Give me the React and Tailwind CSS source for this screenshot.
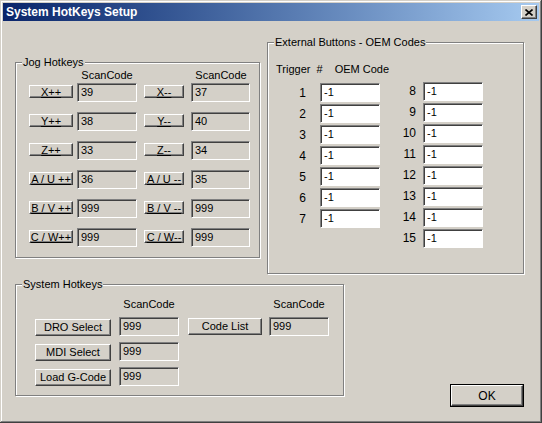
const FONT = { fontFamily: '"Liberation Sans", Arial, sans-serif' };

const raised =
  "border border-t-white border-l-white border-b-[#404040] border-r-[#404040] shadow-[inset_-1px_-1px_0_#808080] bg-[#d4d0c8]";

const Field = ({ value, white, w = "w-[60px]" }) => (
  <div
    className={`${w} h-[19px] shrink-0 border border-t-[#808080] border-l-[#808080] border-b-white border-r-white shadow-[inset_1px_1px_0_#404040] pl-[3px] text-[11px] leading-[17px] text-black ${
      white ? "bg-white" : "bg-[#d4d0c8]"
    }`}
  >
    {value}
  </div>
);

const JogButton = ({ label, w }) => (
  <div
    className={`${w} h-[13px] mt-[2px] shrink-0 flex justify-center ${raised} text-[11px] leading-[12px] text-black`}
  >
    <span className="underline underline-offset-[1px] whitespace-pre">{label}</span>
  </div>
);

const SysButton = ({ label, w = "w-[76px]" }) => (
  <div
    className={`${w} h-[17px] mt-[2px] shrink-0 flex items-center justify-center ${raised} text-[11px] leading-[15px] text-black`}
  >
    {label}
  </div>
);

const Group = ({ title, className, children }) => (
  <div
    className={`relative shrink-0 border border-[#808080] shadow-[inset_1px_1px_0_#fff,1px_1px_0_#fff] ${className}`}
  >
    <div className="absolute -top-[8px] left-[6px] bg-[#d4d0c8] px-[1px] text-[11px] leading-[14px] text-black">
      {title}
    </div>
    {children}
  </div>
);

const jogRows = [
  ["X++", "39", "X--", "37"],
  ["Y++", "38", "Y--", "40"],
  ["Z++", "33", "Z--", "34"],
  ["A / U ++", "36", "A / U --", "35"],
  ["B / V ++", "999", "B / V --", "999"],
  ["C / W++", "999", "C / W--", "999"],
];

export default function App() {
  return (
    <div
      style={FONT}
      className="w-[542px] h-[423px] bg-[#d4d0c8] p-[3px] flex flex-col shadow-[inset_-1px_-1px_0_#404040,inset_1px_1px_0_#d4d0c8,inset_-2px_-2px_0_#808080,inset_2px_2px_0_#fff]"
    >
      {/* title bar */}
      <div className="h-[18px] flex items-center justify-between bg-linear-to-r from-[#0a246a] to-[#a6caf0]">
        <span className="pl-[3px] text-[12px] font-bold text-white leading-[16px]">
          System HotKeys Setup
        </span>
        <div className={`w-[16px] h-[14px] mr-[2px] flex items-center justify-center ${raised}`}>
          <svg width="8" height="7" viewBox="0 0 8 7">
            <path d="M0.5 0.5 L7.5 6.5 M7.5 0.5 L0.5 6.5" stroke="#000" strokeWidth="1.6" />
          </svg>
        </div>
      </div>

      <div className="flex items-start">
        {/* Jog hotkeys */}
        <Group title="Jog Hotkeys" className="ml-[12px] mt-[41px] w-[245px] h-[196px]">
          <div className="pl-[13px] pt-[5px] flex flex-col">
            <div className="flex h-[14px] text-[11px] leading-[14px] text-black">
              <div className="w-[48px]" />
              <div className="w-[60px] text-center">ScanCode</div>
              <div className="w-[54px]" />
              <div className="w-[60px] text-center">ScanCode</div>
            </div>
            <div className="mt-[1px] flex flex-col gap-[10px]">
              {jogRows.map(([a, av, b, bv]) => (
                <div key={a} className="flex items-start h-[19px]">
                  <JogButton label={a} w="w-[44px]" />
                  <div className="ml-[4px]">
                    <Field value={av} />
                  </div>
                  <div className="ml-[7px]">
                    <JogButton label={b} w="w-[40px]" />
                  </div>
                  <div className="ml-[7px]">
                    <Field value={bv} w="w-[59px]" />
                  </div>
                </div>
              ))}
            </div>
          </div>
        </Group>

        {/* External buttons */}
        <Group
          title="External Buttons - OEM Codes"
          className="ml-[7px] mt-[21px] w-[257px] h-[232px]"
        >
          <div className="pl-[8px] pt-[19px] flex flex-col">
            <div className="flex h-[14px] text-[11px] leading-[14px] text-black">
              <span className="whitespace-pre">Trigger  #</span>
              <span className="ml-[12px]">OEM Code</span>
            </div>
            <div className="mt-[7px] flex items-start">
              <div className="flex flex-col gap-[2px]">
                {[1, 2, 3, 4, 5, 6, 7].map((n) => (
                  <div key={n} className="flex items-center h-[19px]">
                    <div className="w-[30px] text-right text-[12px] leading-[14px] text-black">{n}</div>
                    <div className="ml-[14px]">
                      <Field value="-1" white />
                    </div>
                  </div>
                ))}
              </div>
              <div className="ml-[6px] -mt-[1px] flex flex-col gap-[2px]">
                {[8, 9, 10, 11, 12, 13, 14, 15].map((n) => (
                  <div key={n} className="flex items-center h-[19px]">
                    <div className="w-[30px] -mt-[2px] text-right text-[12px] leading-[14px] text-black">{n}</div>
                    <div className="ml-[7px]">
                      <Field value="-1" white />
                    </div>
                  </div>
                ))}
              </div>
            </div>
          </div>
        </Group>
      </div>

      <div className="flex items-start mt-[10px]">
        {/* System hotkeys */}
        <Group title="System Hotkeys" className="ml-[12px] w-[329px] h-[112px]">
          <div className="pl-[19px] pt-[12px] flex flex-col">
            <div className="flex h-[14px] text-[11px] leading-[14px] text-black">
              <div className="w-[84px]" />
              <div className="w-[60px] text-center">ScanCode</div>
              <div className="w-[90px]" />
              <div className="w-[60px] text-center">ScanCode</div>
            </div>
            <div className="mt-[6px] flex items-start">
              <div className="flex flex-col gap-[6px]">
                {[
                  ["DRO Select", "999"],
                  ["MDI Select", "999"],
                  ["Load G-Code", "999"],
                ].map(([l, v]) => (
                  <div key={l} className="flex items-start h-[19px]">
                    <SysButton label={l} />
                    <div className="ml-[8px]">
                      <Field value={v} />
                    </div>
                  </div>
                ))}
              </div>
              <div className="ml-[9px] flex items-start h-[19px]">
                <div className="-mt-[1px]">
                  <SysButton label="Code List" w="w-[74px]" />
                </div>
                <div className="ml-[7px]">
                  <Field value="999" />
                </div>
              </div>
            </div>
          </div>
        </Group>

        <div className="ml-[106px] mt-[100px] w-[74px] h-[23px] border border-black">
          <div
            className={`w-full h-full flex items-center justify-center ${raised} text-[12px] leading-[14px] text-black`}
          >
            OK
          </div>
        </div>
      </div>
    </div>
  );
}
